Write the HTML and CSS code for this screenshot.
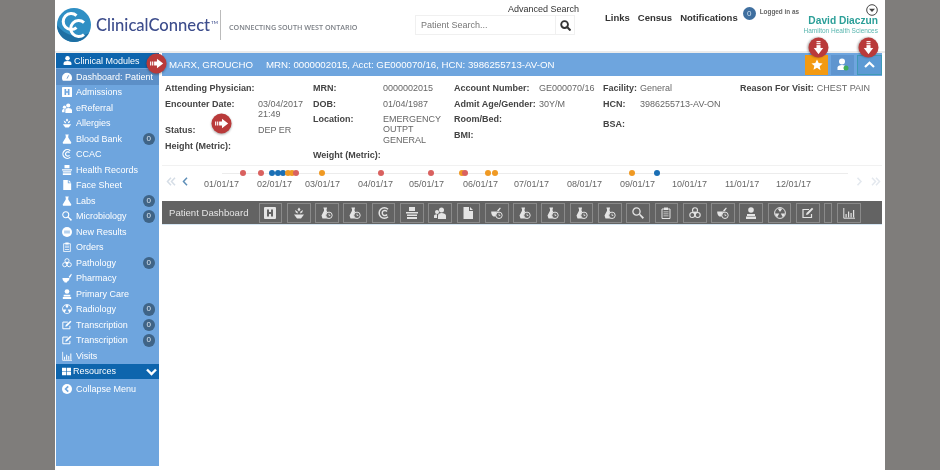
FILE: index.html
```html
<!DOCTYPE html>
<html lang="en">
<head>
  <meta charset="UTF-8">
  <title>ClinicalConnect - Patient Dashboard</title>
  <link rel="stylesheet" href="styles.css">
</head>
<body>
  <svg class="defs" width="0" height="0">
    <symbol id="i-h" viewBox="0 0 12 12"><path fill="currentColor" fill-rule="evenodd" d="M1 0h10a1 1 0 0 1 1 1v10a1 1 0 0 1-1 1H1a1 1 0 0 1-1-1V1a1 1 0 0 1 1-1zm2 2.500v7h2V7h2v2.500h2v-7H7V5H5V2.500z"/></symbol>
    <symbol id="i-hand" viewBox="0 0 12 12"><path fill="currentColor" d="M6 .5 7.500 2.500 6 4.500 4.500 2.500zM2 3l2.500 1.500L5 6.500 2.800 5.500zM10 3 7.500 4.500 7 6.500 9.200 5.500zM1 7.500h10L9.500 9.500 8 11.500H4L2.500 9.500z"/></symbol>
    <symbol id="i-flask" viewBox="0 0 12 12"><path fill="currentColor" d="M4 .5h4v1l-.5.400v2.300L11 10c.5 1-.2 1.800-1 1.800H2c-.8 0-1.500-.8-1-1.800L4.500 4.200V1.900L4 1.500z"/></symbol>
    <symbol id="i-flask-clock" viewBox="0 0 12 12"><path fill="currentColor" d="M2.500.5h3.500v1l-.4.300v2L8 7.500 7 11.500H1.500L.5 8.500 3 3.800v-2l-.5-.3z"/><circle cx="8" cy="8.300" r="3.200" fill="#666" stroke="currentColor"/><path fill="none" stroke="currentColor" stroke-width=".8" d="M8 6.700v1.800h1.300"/></symbol>
    <symbol id="i-mortar-clock" viewBox="0 0 12 12"><path fill="currentColor" d="M.2 4.500H7c.5 2-1 4.500-2.500 5H2.500C1 9 0 6.500.2 4.500zM6 3.500 9 .5l.8.700L7.500 4.500z"/><circle cx="8" cy="8.300" r="3.200" fill="#666" stroke="currentColor"/><path fill="none" stroke="currentColor" stroke-width=".8" d="M8 6.700v1.800h1.300"/></symbol>
    <symbol id="i-c" viewBox="0 0 12 12"><path fill="none" stroke="currentColor" stroke-width="1.500" d="M10 2.300A5.200 5.200 0 1 0 10 9.700M9 4.500A2.600 2.600 0 1 0 9 7.500"/></symbol>
    <symbol id="i-rec" viewBox="0 0 12 12"><path fill="currentColor" d="M3 0h6v4H3zM0 5h12v1.500H0zM1 7.500h10V9H1zM1 10h10v2H1z"/></symbol>
    <symbol id="i-people" viewBox="0 0 12 12"><circle cx="7.500" cy="3" r="2.500" fill="currentColor"/><path fill="currentColor" d="M4 12V8.500C4 7 5.500 6 7.500 6S12 7 12 8.500V12z"/><circle cx="3" cy="5" r="2" fill="currentColor"/><path fill="currentColor" d="M0 11V9c0-1 1-1.800 3-1.800V11z"/></symbol>
    <symbol id="i-doc" viewBox="0 0 12 12"><path fill="currentColor" d="M1.500 0H7v4h4v8H1.500zM8 0l3 3H8z"/></symbol>
    <symbol id="i-micro" viewBox="0 0 12 12"><path fill="currentColor" d="M7 7.800 8 6.800 12 10.500 10.700 12z"/><circle cx="4.500" cy="4.500" r="3.600" fill="none" stroke="currentColor" stroke-width="1.300"/></symbol>
    <symbol id="i-clip" viewBox="0 0 12 12"><path fill="none" stroke="currentColor" d="M2 2h8v9.500H2z"/><path fill="currentColor" d="M4 .5h4v2.500H4zM3.500 4.500h5v.8h-5zM3.500 6.500h5v.8h-5zM3.500 8.500h5v.8h-5z"/></symbol>
    <symbol id="i-bio" viewBox="0 0 12 12"><circle cx="6" cy="6" r="1.400" fill="currentColor"/><g fill="none" stroke="currentColor" stroke-width="1.100"><circle cx="6" cy="3.300" r="2.500"/><circle cx="3.300" cy="8" r="2.500"/><circle cx="8.700" cy="8" r="2.500"/></g></symbol>
    <symbol id="i-mortar" viewBox="0 0 12 12"><path fill="currentColor" d="M.5 6h8.500c0 2.500-1.500 4-3 4.500V11.500H3V10.500C1.500 10 .5 8 .5 6zM8 4.500 11 1l.8.7L9.500 6z"/></symbol>
    <symbol id="i-care" viewBox="0 0 12 12"><circle cx="6" cy="3" r="2.800" fill="currentColor"/><path fill="currentColor" d="M2 7h8v2H2zM1 9.500h10V12H1z"/></symbol>
    <symbol id="i-rad" viewBox="0 0 12 12"><circle cx="6" cy="6" r="5.400" fill="none" stroke="currentColor"/><path fill="currentColor" d="M6 5 3.800 1.800A5 5 0 0 1 8.200 1.800zM6.800 6.500h4.200a5 5 0 0 1-2.200 3.800zM5.200 6.500 3.200 10.300A5 5 0 0 1 1 6.500z"/></symbol>
    <symbol id="i-note" viewBox="0 0 12 12"><path fill="none" stroke="currentColor" stroke-width="1.200" d="M9.500 7v3.500h-8.500V2.500h6"/><path fill="currentColor" d="M4.500 6 10 .8l1.300 1.300L6 7.500 4 8z"/></symbol>
    <symbol id="i-chart" viewBox="0 0 12 12"><path fill="none" stroke="currentColor" d="M.8 1v10.200H12"/><path fill="currentColor" d="M2.500 7h1.200v3.500H2.500zM5 4.500h1.200v6H5zM7.500 6h1.200v4.500H7.500zM10 3h1.200v7.500H10z"/></symbol>
    <symbol id="i-dash" viewBox="0 0 12 12"><path fill="currentColor" d="M6 1a6 6 0 0 1 6 6 6 6 0 0 1-1 3.500H1A6 6 0 0 1 0 7a6 6 0 0 1 6-6z"/><path stroke="#5c8fc7" d="M6 8 8 4"/></symbol>
    <symbol id="i-user" viewBox="0 0 12 12"><circle cx="6" cy="3" r="3" fill="currentColor"/><path fill="currentColor" d="M.8 12V9.500C.8 7.500 3 6.500 6 6.500s5.200 1 5.200 3V12z"/></symbol>
    <symbol id="i-grid" viewBox="0 0 14 12"><path fill="currentColor" d="M0 0h6.500v5.500H0zM7.500 0H14v5.500H7.500zM0 6.500h6.500V12H0zM7.500 6.500H14V12H7.500z"/></symbol>
    <symbol id="i-back" viewBox="0 0 12 12"><circle cx="6" cy="6" r="6" fill="currentColor"/><path fill="none" stroke="#6ea5de" stroke-width="2" d="M7.500 2.800 4.300 6l3.200 3.200"/></symbol>
    <symbol id="i-new" viewBox="0 0 12 12"><circle cx="6" cy="6" r="6" fill="currentColor"/><path fill="#6ea5de" d="M2.500 4.500h7v1h-7zM2.500 6.500h7v1h-7z"/></symbol>
    <symbol id="i-arrow" viewBox="0 0 22 22"><circle cx="11" cy="11" r="10.500" fill="#b93a3a"/><path fill="#fff" d="M11.500 6l6.500 5-6.500 5v-3h-3v-4h3zM4.300 9h1.200v4H4.300zM6.400 9h1.200v4H6.400z"/></symbol>
  </svg>

  <div class="page">
    <header class="topbar">
      <div class="logo">
        <svg class="logo-mark" viewBox="0 0 34 34">
          <circle cx="17" cy="17" r="17" fill="#2f8fc4"/>
          <path fill="#1e6fa3" d="M0 17a17 17 0 0 0 32 8C22 31 8 28 0 17z"/>
          <g fill="none" stroke="#fff" stroke-width="3">
            <path d="M19.500 7.500a8 8 0 1 0 0 12"/>
            <path d="M27 14.500a8 8 0 1 0 0 12"/>
          </g>
        </svg>
        <span class="logo-name">ClinicalConnect<sup>TM</sup></span>
        <span class="logo-tag">Connecting South West Ontario</span>
      </div>
      <div class="search">
        <a class="adv-search">Advanced Search</a>
        <div class="search-box">
          <span class="search-input">Patient Search...</span>
          <span class="search-btn"><svg width="11" height="11" viewBox="0 0 12 12"><circle cx="5" cy="5" r="3.700" fill="none" stroke="#333" stroke-width="2"/><path stroke="#333" stroke-width="2.200" d="M8 8l3.500 3.500"/></svg></span>
        </div>
      </div>
      <nav class="toplinks">
        <a>Links</a><a>Census</a><a>Notifications</a>
      </nav>
      <span class="note-badge">0</span>
      <span class="logged">Logged in as</span>
      <div class="user">
        <svg class="user-menu" width="12" height="12" viewBox="0 0 12 12"><circle cx="6" cy="6" r="5.300" fill="none" stroke="#444"/><path fill="#444" d="M3 4.800h6L6 8z"/></svg>
        <span class="user-name">David Diaczun</span>
        <span class="user-org">Hamilton Health Sciences</span>
      </div>
    </header>

    <div class="main">
      <aside class="sidebar">
        <div class="side-head"><svg class="ic"><use href="#i-user"/></svg>Clinical Modules</div>
        <ul class="side-list">
          <li class="active"><svg class="ic"><use href="#i-dash"/></svg>Dashboard: Patient</li>
          <li><svg class="ic"><use href="#i-h"/></svg>Admissions</li>
          <li><svg class="ic"><use href="#i-people"/></svg>eReferral</li>
          <li><svg class="ic"><use href="#i-hand"/></svg>Allergies</li>
          <li><svg class="ic"><use href="#i-flask"/></svg>Blood Bank<b>0</b></li>
          <li><svg class="ic"><use href="#i-c"/></svg>CCAC</li>
          <li><svg class="ic"><use href="#i-rec"/></svg>Health Records</li>
          <li><svg class="ic"><use href="#i-doc"/></svg>Face Sheet</li>
          <li><svg class="ic"><use href="#i-flask"/></svg>Labs<b>0</b></li>
          <li><svg class="ic"><use href="#i-micro"/></svg>Microbiology<b>0</b></li>
          <li><svg class="ic"><use href="#i-new"/></svg>New Results</li>
          <li><svg class="ic"><use href="#i-clip"/></svg>Orders</li>
          <li><svg class="ic"><use href="#i-bio"/></svg>Pathology<b>0</b></li>
          <li><svg class="ic"><use href="#i-mortar"/></svg>Pharmacy</li>
          <li><svg class="ic"><use href="#i-care"/></svg>Primary Care</li>
          <li><svg class="ic"><use href="#i-rad"/></svg>Radiology<b>0</b></li>
          <li><svg class="ic"><use href="#i-note"/></svg>Transcription<b>0</b></li>
          <li><svg class="ic"><use href="#i-note"/></svg>Transcription<b>0</b></li>
          <li><svg class="ic"><use href="#i-chart"/></svg>Visits</li>
        </ul>
        <div class="side-head side-res"><svg class="ic"><use href="#i-grid"/></svg>Resources
          <svg class="chev" width="11" height="8" viewBox="0 0 11 8"><path fill="none" stroke="#fff" stroke-width="2.400" d="M1 1.500l4.500 4.500L10 1.500"/></svg>
        </div>
        <div class="collapse"><svg class="ic"><use href="#i-back"/></svg>Collapse Menu</div>
      </aside>

      <section class="content">
        <div class="patient-bar">
          <span class="pt-name">MARX, GROUCHO</span>
          <span class="pt-ids">MRN: 0000002015, Acct: GE000070/16, HCN: 3986255713-AV-ON</span>
          <div class="pt-actions">
            <span class="pt-btn star"><svg width="12" height="12" viewBox="0 0 12 12"><path fill="#fff" d="M6 .5l1.700 3.600 3.900.5-2.900 2.700.8 3.900L6 8.800l-3.500 1.900.8-3.900L.4 4.600l3.900-.5z"/></svg></span>
            <span class="pt-btn add"><svg width="13" height="13" viewBox="0 0 13 13"><circle cx="6" cy="3.500" r="3" fill="#fff"/><path fill="#fff" d="M1.500 12V9.500C1.500 8 3.500 7 6 7s4 1 4 2.500V12z"/><circle cx="10" cy="10" r="2.500" fill="#3fae5a"/></svg></span>
            <span class="pt-btn up"><svg width="11" height="7" viewBox="0 0 11 7"><path fill="none" stroke="#fff" stroke-width="2.200" d="M1 6l4.500-4.200L10 6"/></svg></span>
          </div>
        </div>

        <div class="details">
          <div class="col col1">
            <div class="row"><label>Attending Physician:</label></div>
            <div class="row r-enc"><label>Encounter Date:</label><span>03/04/2017<br>21:49</span></div>
            <div class="row r-status"><label>Status:</label><span>DEP ER</span></div>
            <div class="row"><label>Height (Metric):</label></div>
          </div>
          <div class="col col2">
            <div class="row"><label>MRN:</label><span>0000002015</span></div>
            <div class="row"><label>DOB:</label><span>01/04/1987</span></div>
            <div class="row r-loc"><label>Location:</label><span>EMERGENCY<br>OUTPT<br>GENERAL</span></div>
            <div class="row"><label>Weight (Metric):</label></div>
          </div>
          <div class="col col3">
            <div class="row"><label>Account Number:</label><span>GE000070/16</span></div>
            <div class="row"><label>Admit Age/Gender:</label><span>30Y/M</span></div>
            <div class="row"><label>Room/Bed:</label></div>
            <div class="row"><label>BMI:</label></div>
          </div>
          <div class="col col4">
            <div class="row"><label class="auto">Facility:</label><span>General</span></div>
            <div class="row"><label>HCN:</label><span>3986255713-AV-ON</span></div>
            <div class="row r-bsa"><label>BSA:</label></div>
          </div>
          <div class="col col5">
            <div class="row"><label class="auto">Reason For Visit:</label><span>CHEST PAIN</span></div>
          </div>
        </div>

        <div class="timeline">
          <svg class="nav" width="22" height="9" viewBox="0 0 22 9"><path fill="none" stroke="#d5dde6" stroke-width="1.500" d="M5 .8 1.500 4.500 5 8.200M9 .8 5.500 4.500 9 8.200"/><path fill="none" stroke="#5f8fb8" stroke-width="1.500" d="M21 .8l-3.500 3.700 3.500 3.700"/></svg>
          <div class="track">
            <i style="left:52px" class="red"></i><i style="left:70px" class="red"></i>
            <i style="left:81px" class="blue"></i><i style="left:87px" class="blue"></i><i style="left:92px" class="blue"></i>
            <i style="left:97px" class="org"></i><i style="left:101px" class="org"></i><i style="left:105px" class="red"></i>
            <i style="left:131px" class="org"></i><i style="left:190px" class="red"></i><i style="left:240px" class="red"></i>
            <i style="left:271px" class="org"></i><i style="left:274px" class="red"></i>
            <i style="left:297px" class="org"></i><i style="left:304px" class="org"></i>
            <i style="left:441px" class="org"></i><i style="left:466px" class="blue"></i>
            <span style="left:16px">01/01/17</span><span style="left:69px">02/01/17</span><span style="left:117px">03/01/17</span>
            <span style="left:170px">04/01/17</span><span style="left:221px">05/01/17</span><span style="left:275px">06/01/17</span>
            <span style="left:326px">07/01/17</span><span style="left:379px">08/01/17</span><span style="left:432px">09/01/17</span>
            <span style="left:484px">10/01/17</span><span style="left:537px">11/01/17</span><span style="left:588px">12/01/17</span>
          </div>
          <svg class="nav" width="26" height="9" viewBox="0 0 26 9"><path fill="none" stroke="#e3e8ee" stroke-width="1.500" d="M1.500.8 5 4.500 1.500 8.200M16 .8l3.500 3.700L16 8.200M20 .8l3.500 3.700L20 8.200"/></svg>
        </div>

        <div class="toolbar">
          <span class="tb-title">Patient Dashboard</span>
          <span class="tool"><svg><use href="#i-h"/></svg></span>
          <span class="tool"><svg><use href="#i-hand"/></svg></span>
          <span class="tool"><svg><use href="#i-flask-clock"/></svg></span>
          <span class="tool"><svg><use href="#i-flask-clock"/></svg></span>
          <span class="tool"><svg><use href="#i-c"/></svg></span>
          <span class="tool"><svg><use href="#i-rec"/></svg></span>
          <span class="tool"><svg><use href="#i-people"/></svg></span>
          <span class="tool"><svg><use href="#i-doc"/></svg></span>
          <span class="tool"><svg><use href="#i-mortar-clock"/></svg></span>
          <span class="tool"><svg><use href="#i-flask-clock"/></svg></span>
          <span class="tool"><svg><use href="#i-flask-clock"/></svg></span>
          <span class="tool"><svg><use href="#i-flask-clock"/></svg></span>
          <span class="tool"><svg><use href="#i-flask-clock"/></svg></span>
          <span class="tool"><svg><use href="#i-micro"/></svg></span>
          <span class="tool"><svg><use href="#i-clip"/></svg></span>
          <span class="tool"><svg><use href="#i-bio"/></svg></span>
          <span class="tool"><svg><use href="#i-mortar-clock"/></svg></span>
          <span class="tool"><svg><use href="#i-care"/></svg></span>
          <span class="tool"><svg><use href="#i-rad"/></svg></span>
          <span class="tool"><svg><use href="#i-note"/></svg></span>
          <span class="tool narrow"></span>
          <span class="tool"><svg><use href="#i-chart"/></svg></span>
        </div>
      </section>
    </div>

    <!-- tutorial markers on top of the page -->
    <svg class="marker m1"><use href="#i-arrow"/></svg>
    <svg class="marker m2"><use href="#i-arrow"/></svg>
    <svg class="marker m3 down"><use href="#i-arrow"/></svg>
    <svg class="marker m4 down"><use href="#i-arrow"/></svg>
  </div>
</body>
</html>
```

FILE: styles.css
```css
* {
  box-sizing: border-box;
}

html, body {
  margin: 0;
  height: 470px;
  overflow: hidden;
}

body {
  background: #7f7d7b;
  padding: 0 55px;
  font-family: "Liberation Sans", Arial, sans-serif;
  font-size: 9px;
  color: #666;
}

.defs {
  position: absolute;
}

.page {
  position: relative;
  width: 830px;
  height: 470px;
  background: #fff;
  filter: blur(0.45px);
}

/* Top header */
.topbar {
  display: flex;
  height: 53px;
  border-bottom: 2px solid #ececec;
}

.logo {
  display: flex;
  flex: none;
  align-items: center;
  width: 360px;
  height: 50px;
  padding-left: 2px;
}

.logo-mark {
  width: 34px;
  height: 34px;
  flex: none;
}

.logo-name {
  flex: none;
  margin-left: 5px;
  width: 125px;
  border-right: 1px solid #bbb;
  height: 30px;
  line-height: 30px;
  font-family: Lato, sans-serif;
  font-size: 16.600px;
  font-weight: 500;
  color: #3d4d8c;
  white-space: nowrap;
}

.logo-name sup {
  font-size: 4.500px;
  vertical-align: 7px;
  line-height: 0;
  margin-left: 1px;
}

.logo-tag {
  margin-left: 8px;
  padding-top: 3px;
  font-family: "Open Sans", sans-serif;
  font-size: 7.200px;
  font-weight: 600;
  text-transform: uppercase;
  color: #7b7f85;
  white-space: nowrap;
}

.search {
  flex: none;
  width: 164px;
  display: flex;
  flex-direction: column;
  align-items: flex-end;
  padding-top: 4px;
}

.adv-search {
  font-size: 9px;
  line-height: 11px;
  color: #333;
}

.search-box {
  display: flex;
  width: 160px;
  height: 20px;
  margin: 0 4px 0 0;
  border: 1px solid #f0f0f0;
}

.search-input {
  flex: 1;
  padding: 4px 0 0 5px;
  font-size: 9px;
  color: #777;
}

.search-btn {
  width: 19px;
  border-left: 1px solid #f0f0f0;
  display: flex;
  align-items: center;
  justify-content: center;
}

.toplinks {
  display: flex;
  gap: 8px;
  margin: 12px 0 0 26px;
  font-size: 9.500px;
  line-height: 11px;
  font-weight: bold;
  color: #333;
}

.note-badge {
  width: 13px;
  height: 13px;
  margin: 7px 0 0 5px;
  border-radius: 50%;
  background: #3f6f9f;
  color: #cfe0f0;
  font-size: 8px;
  line-height: 13px;
  text-align: center;
}

.logged {
  margin: 7px 0 0 4px;
  font-size: 6.400px;
  line-height: 9px;
  font-weight: bold;
  color: #666;
  white-space: nowrap;
}

.user {
  flex: 1;
  display: flex;
  flex-direction: column;
  align-items: flex-end;
  padding: 4px 7px 0 0;
}

.user-name {
  margin-top: -1px;
  font-size: 10.200px;
  line-height: 11px;
  font-weight: bold;
  color: #2b9f98;
  white-space: nowrap;
}

.user-org {
  font-size: 6.500px;
  line-height: 9px;
  color: #57b5ae;
  white-space: nowrap;
}

/* Sidebar and content */
.main {
  display: flex;
  height: 413px;
}

.sidebar {
  width: 103px;
  margin-left: 1px;
  background: #6ea5de;
  color: #fff;
  flex: none;
}

.side-head {
  position: relative;
  display: flex;
  align-items: center;
  height: 15px;
  padding-left: 7px;
  background: #0e65ad;
  white-space: nowrap;
}

.side-head .ic {
  width: 9px;
  height: 9px;
  margin-right: 2px;
}

.side-res {
  padding-left: 6px;
}

.chev {
  position: absolute;
  right: 2px;
  top: 4px;
}

.side-list {
  list-style: none;
  margin: 1px 0 0;
  padding: 0;
}

.side-list li {
  position: relative;
  display: flex;
  align-items: center;
  height: 15.500px;
  padding-left: 6px;
  white-space: nowrap;
}

.side-list li.active {
  background: #5c8fc7;
}

.ic {
  width: 10px;
  height: 10px;
  margin-right: 4px;
  flex: none;
  color: #fff;
}

.side-list b {
  position: absolute;
  right: 4px;
  top: 1.500px;
  width: 12.500px;
  height: 12.500px;
  border-radius: 50%;
  background: #3f6487;
  color: #dfe8f0;
  font-size: 8px;
  font-weight: normal;
  line-height: 12.500px;
  text-align: center;
}

.collapse {
  display: flex;
  align-items: center;
  height: 15px;
  margin-top: 3px;
  padding-left: 6px;
}

.content {
  flex: 1;
  min-width: 0;
  margin: 0 3px;
}

.patient-bar {
  display: flex;
  align-items: center;
  height: 23px;
  padding-left: 7px;
  background: #6ea5de;
  color: #fff;
  font-size: 9.700px;
}

.pt-ids {
  margin-left: 13px;
}

.pt-actions {
  display: flex;
  gap: 3px;
  margin-left: auto;
}

.pt-btn {
  display: flex;
  align-items: center;
  justify-content: center;
  width: 23px;
  height: 20px;
}

.star {
  background: #f39a12;
}

.add {
  background: #5f95cf;
}

.up {
  width: 25px;
  background: #5c9ad4;
  border: 1px solid #3f9ab5;
}

/* Patient details */
.details {
  display: flex;
  height: 90px;
  padding: 7px 0 0 3px;
  line-height: 10.300px;
  border-bottom: 1px solid #f1f1f1;
}

.col {
  flex: none;
}

.col1 {
  width: 148px;
}

.col2 {
  width: 141px;
}

.col3 {
  width: 149px;
}

.col4 {
  width: 137px;
}

.row {
  display: flex;
  min-height: 15.500px;
}

.row label {
  font-weight: bold;
  color: #444;
  white-space: nowrap;
}

.row span {
  white-space: nowrap;
}

.col1 label {
  width: 93px;
}

.col2 label {
  width: 70px;
}

.col3 label {
  width: 85px;
}

.col4 label {
  width: 37px;
}

.row label.auto {
  width: auto;
  margin-right: 3px;
}

.r-enc {
  min-height: 26px;
}

.r-status {
  min-height: 16px;
}

.r-loc {
  min-height: 36px;
}

.r-bsa {
  margin-top: 5px;
}

/* Timeline */
.timeline {
  display: flex;
  align-items: flex-start;
  height: 35px;
  padding: 11px 0 0 4px;
}

.track {
  position: relative;
  flex: none;
  width: 668px;
  height: 20px;
  margin-top: -7px;
  background: linear-gradient(#ececec, #ececec) no-repeat 34px 3px / 626px 1px;
}

.track i {
  position: absolute;
  top: 0;
  width: 6px;
  height: 6px;
  border-radius: 50%;
}

.track .red {
  background: #d9615f;
}

.track .blue {
  background: #1a6fb5;
}

.track .org {
  background: #f09a24;
}

.track span {
  position: absolute;
  top: 9px;
  color: #666;
}

.nav {
  flex: none;
}

/* Dark toolbar */
.toolbar {
  display: flex;
  align-items: center;
  gap: 4.600px;
  height: 24px;
  padding-left: 7px;
  background: #636363;
  border-bottom: 1px solid #d5e6f3;
  color: #e4e4e4;
}

.tb-title {
  width: 85px;
  font-size: 9.600px;
  white-space: nowrap;
}

.tool {
  display: flex;
  align-items: center;
  justify-content: center;
  width: 23.700px;
  height: 20px;
  border: 1px solid #8a8a8a;
}

.tool svg {
  width: 12px;
  height: 12px;
}

.tool.narrow {
  width: 8px;
}

/* Red tutorial markers */
.marker {
  position: absolute;
  width: 21px;
  height: 21px;
  filter: drop-shadow(0 1px 1px rgba(0, 0, 0, 0.35));
}

.marker.down {
  transform: rotate(90deg);
}

.m1 {
  left: 91px;
  top: 53px;
}

.m2 {
  left: 156px;
  top: 113px;
}

.m3 {
  left: 753px;
  top: 37px;
}

.m4 {
  left: 803px;
  top: 37px;
}
```
